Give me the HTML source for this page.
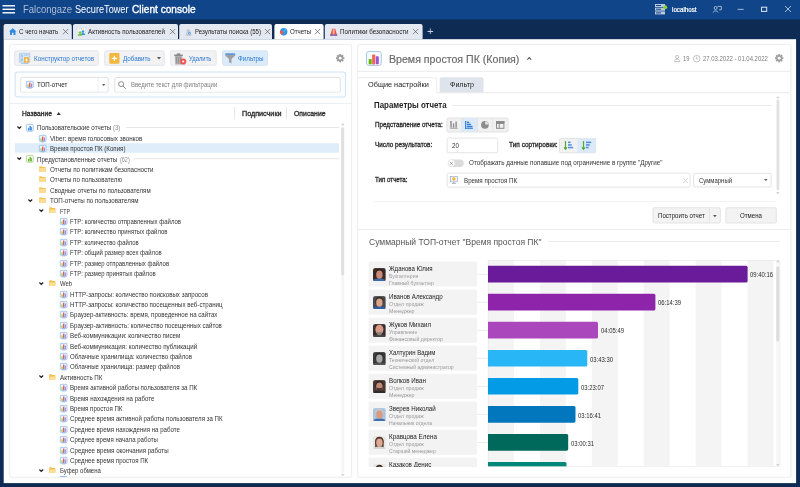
<!DOCTYPE html>
<html lang="ru"><head><meta charset="utf-8"><title>Falcongaze SecureTower Client console</title>
<style>
html,body{margin:0;padding:0;}
body{width:800px;height:487px;overflow:hidden;position:relative;background:#0d2b53;font-family:"Liberation Sans",sans-serif;}
.a{position:absolute;box-sizing:border-box;transform-origin:0 0;}
.t{position:absolute;white-space:nowrap;transform-origin:0 50%;display:block;}
svg{position:absolute;overflow:visible;}
</style></head><body><div id="root" style="position:absolute;left:0;top:0;width:800px;height:487px;will-change:transform;">
<div class="a" style="left:0px;top:0px;width:800px;height:20px;transform:translate(0.000px,0.000px) scale(1.0000,0.9850);background:#10458a;"></div>
<div class="a" style="left:0px;top:19px;width:800px;height:20px;transform:translate(0.000px,0.700px) scale(1.0000,1.0000);background:#0d2b53;"></div>
<div class="a" style="left:3px;top:39px;width:792px;height:444px;transform:translate(0.700px,0.200px) scale(1.0005,0.9998);background:#fefefe;"></div>
<div class="a" style="left:9px;top:44px;width:343px;height:434px;transform:translate(0.200px,0.000px) scale(0.9994,0.9995);background:#fff;border:1px solid #eeeff1;border-radius:3px;box-shadow:0 0 1.5px rgba(40,50,70,0.05);"></div>
<div class="a" style="left:357px;top:44px;width:434px;height:434px;transform:translate(0.200px,0.000px) scale(1.0000,0.9995);background:#fff;border:1px solid #eeeff1;border-radius:3px;box-shadow:0 0 1.5px rgba(40,50,70,0.05);"></div>
<div class="a" style="left:2px;top:5px;width:12px;height:1px;transform:translate(0.500px,0.100px) scale(1.0417,1.4000);background:#fff;"></div>
<div class="a" style="left:2px;top:8px;width:12px;height:1px;transform:translate(0.500px,0.600px) scale(1.0417,1.4000);background:#fff;"></div>
<div class="a" style="left:2px;top:12px;width:12px;height:1px;transform:translate(0.500px,0.100px) scale(1.0417,1.4000);background:#fff;"></div>
<span class="t" style="left:23px;top:2.60px;font-size:10px;line-height:14.0px;color:#aebbd6;transform:scaleX(0.9479);">Falcongaze</span>
<span class="t" style="left:74.5px;top:2.60px;font-size:10px;line-height:14.0px;color:#ffffff;transform:scaleX(0.9168);">SecureTower</span>
<span class="t" style="left:131.5px;top:2.60px;font-size:10px;line-height:14.0px;color:#ffffff;-webkit-text-stroke:0.35px #ffffff;transform:scaleX(1.0110);">Client console</span>
<svg style="left:655px;top:4px" width="12" height="11" viewBox="0 0 12 11"><rect x="0" y="0" width="10" height="3" fill="#bcc8dc"/><rect x="0" y="3.7" width="10" height="3" fill="#bcc8dc"/><rect x="0" y="7.4" width="10" height="3" fill="#bcc8dc"/><rect x="1" y="1" width="5" height="1" fill="#10458a"/><rect x="1" y="4.7" width="5" height="1" fill="#10458a"/><rect x="1" y="8.4" width="5" height="1" fill="#10458a"/><circle cx="10.2" cy="3.2" r="2" fill="#8bd13f"/></svg>
<span class="t" style="left:672px;top:5.18px;font-size:6.6px;line-height:9.24px;color:#ffffff;-webkit-text-stroke:0.2px #ffffff;transform:scaleX(0.9406);">localhost</span>
<svg style="left:712.5px;top:6px" width="9" height="7" viewBox="0 0 9 7" fill="none" stroke="#e6ecf6" stroke-width="0.65"><circle cx="2.6" cy="2" r="1.5"/><path d="M0.3 6.6 C0.3 4.2 4.9 4.2 4.9 6.6"/><path d="M4.5 0.4 H8.3 V3.8 H6"/></svg>
<div class="a" style="left:737px;top:8px;width:6px;height:1px;transform:translate(0.600px,0.900px) scale(1.0000,0.7000);background:#e6ecf6;"></div>
<div class="a" style="left:761px;top:6px;width:6px;height:5px;transform:translate(0.000px,0.700px) scale(1.0333,1.0400);border:0.6px solid #d9e1ef;"></div>
<svg style="left:785px;top:6.4px" width="6" height="6" viewBox="0 0 6 6" stroke="#e6ecf6" stroke-width="0.7"><path d="M0 0 L6 6 M6 0 L0 6"/></svg>
<div class="a" style="left:3px;top:24px;width:68px;height:15px;transform:translate(0.600px,0.000px) scale(1.0029,1.0133);background:#e4e8f1;border-radius:2px 2px 0 0;"></div>
<span class="t" style="left:19.3px;top:27.24px;font-size:6.8px;line-height:9.52px;color:#222;transform:scaleX(0.9044);">С чего начать</span>
<svg style="left:62.5px;top:29.3px" width="5.2" height="5.2" viewBox="0 0 6 6" stroke="#555" stroke-width="0.8"><path d="M0 0 L6 6 M6 0 L0 6"/></svg>
<div class="a" style="left:73px;top:24px;width:105px;height:15px;transform:translate(0.000px,0.000px) scale(1.0000,1.0133);background:#e4e8f1;border-radius:2px 2px 0 0;"></div>
<span class="t" style="left:88px;top:27.24px;font-size:6.8px;line-height:9.52px;color:#222;transform:scaleX(0.9107);">Активность пользователей</span>
<svg style="left:169.5px;top:29.3px" width="5.2" height="5.2" viewBox="0 0 6 6" stroke="#555" stroke-width="0.8"><path d="M0 0 L6 6 M6 0 L0 6"/></svg>
<div class="a" style="left:179px;top:24px;width:93px;height:15px;transform:translate(0.200px,0.000px) scale(0.9978,1.0133);background:#e4e8f1;border-radius:2px 2px 0 0;"></div>
<span class="t" style="left:194.5px;top:27.24px;font-size:6.8px;line-height:9.52px;color:#222;transform:scaleX(0.9024);">Результаты поиска (55)</span>
<svg style="left:264.6px;top:29.3px" width="5.2" height="5.2" viewBox="0 0 6 6" stroke="#555" stroke-width="0.8"><path d="M0 0 L6 6 M6 0 L0 6"/></svg>
<div class="a" style="left:274px;top:24px;width:49px;height:15px;transform:translate(0.400px,0.000px) scale(1.0041,1.0133);background:#ffffff;border-radius:2px 2px 0 0;"></div>
<span class="t" style="left:290px;top:27.24px;font-size:6.8px;line-height:9.52px;color:#222;transform:scaleX(0.8935);">Отчеты</span>
<svg style="left:315.2px;top:29.3px" width="5.2" height="5.2" viewBox="0 0 6 6" stroke="#555" stroke-width="0.8"><path d="M0 0 L6 6 M6 0 L0 6"/></svg>
<div class="a" style="left:324px;top:24px;width:98px;height:15px;transform:translate(0.800px,0.000px) scale(0.9980,1.0133);background:#e4e8f1;border-radius:2px 2px 0 0;"></div>
<span class="t" style="left:340.4px;top:27.24px;font-size:6.8px;line-height:9.52px;color:#222;transform:scaleX(0.9166);">Политики безопасности</span>
<svg style="left:413.2px;top:29.3px" width="5.2" height="5.2" viewBox="0 0 6 6" stroke="#555" stroke-width="0.8"><path d="M0 0 L6 6 M6 0 L0 6"/></svg>
<svg style="left:9px;top:28.3px" width="7.5" height="7" viewBox="0 0 10 9"><path d="M5 0 L10 4.6 H8.6 V9 H6 V6 H4 V9 H1.4 V4.6 H0 Z" fill="#2f8be0"/></svg>
<svg style="left:77.1px;top:27.2px" width="8.7" height="9.1" viewBox="0 0 8.7 9.1"><rect x="0.3" y="0.3" width="8.1" height="8.5" fill="#f7fafd" stroke="#d5dde8" stroke-width="0.6"/><circle cx="2.4" cy="2" r="0.6" fill="#f2c84b"/><circle cx="4.4" cy="1.7" r="0.6" fill="#6fb5ee"/><circle cx="6.3" cy="2.2" r="0.6" fill="#f2c84b"/><circle cx="6" cy="4.6" r="1.3" fill="#2f9be8"/><path d="M3.9 8 C3.9 5.4 8.1 5.4 8.1 8 Z" fill="#2f9be8"/><circle cx="3.1" cy="5.6" r="1.4" fill="#7bc142"/><path d="M0.7 8.8 C0.7 6.2 5.5 6.2 5.5 8.8 Z" fill="#7bc142"/></svg>
<svg style="left:184.8px;top:27.6px" width="7" height="8.4" viewBox="0 0 7 8.4"><path d="M3.2 0.4 L5.2 2.6 L6.6 7.9 H0.5 L1.6 3 Z" fill="#c9cdd5"/><path d="M2.2 1.6 L4.2 4.8" stroke="#8fc0ee" stroke-width="0.7"/><circle cx="4.4" cy="5.3" r="1.2" fill="#4a9ae0"/><circle cx="4.4" cy="5.3" r="0.5" fill="#eef3f9"/></svg>
<svg style="left:279.5px;top:28px" width="7.5" height="7.5" viewBox="0 0 8 8"><circle cx="4" cy="4" r="3.9" fill="#2f97ea"/><path d="M4 4 L0.5 2.4 A3.9 3.9 0 0 0 2.3 7.5 Z" fill="#f0574c"/><path d="M4 4 L6.4 1" stroke="#bfe0fa" stroke-width="0.5"/></svg>
<svg style="left:329.6px;top:27.8px" width="7.4" height="8" viewBox="0 0 8 8"><path d="M2.3 0.4 H5.7 L7.6 7.6 H0.4 Z" fill="#e8564a"/><rect x="3" y="1" width="2" height="6" fill="#f3b4a0"/><rect x="0" y="6.8" width="8" height="1.2" fill="#6a4fb0"/></svg>
<span class="t" style="left:426.8px;top:23.35px;font-size:11.5px;line-height:16.1px;color:#c9d2e6;transform:scaleX(0.9826);">+</span>
<div class="a" style="left:14px;top:50px;width:85px;height:16px;transform:translate(0.200px,0.300px) scale(0.9953,0.9688);background:#f2f2f3;border:1px solid #e3e6ea;border-radius:2px;"></div>
<div class="a" style="left:104px;top:50px;width:61px;height:16px;transform:translate(0.200px,0.300px) scale(0.9934,0.9688);background:#f2f2f3;border:1px solid #e3e6ea;border-radius:2px;"></div>
<div class="a" style="left:170px;top:50px;width:46px;height:16px;transform:translate(0.300px,0.300px) scale(1.0087,0.9688);background:#f2f2f3;border:1px solid #e3e6ea;border-radius:2px;"></div>
<div class="a" style="left:222px;top:50px;width:46px;height:16px;transform:translate(0.000px,0.300px) scale(1.0000,0.9688);background:#dcebf9;border:1px solid #d3e4f5;border-radius:2px;"></div>
<svg style="left:19px;top:52.7px" width="11.3" height="11.2" viewBox="0 0 11.3 11.2"><rect x="0.4" y="0.4" width="10.4" height="8.8" fill="#d9e8f8" stroke="#8fb8e6" stroke-width="0.8" stroke-dasharray="1.1 0.5"/><rect x="1.5" y="1.6" width="2.6" height="2.8" fill="#a9c9ec"/><rect x="4.8" y="1.6" width="4.6" height="1.1" fill="#a9c9ec"/><rect x="1.5" y="5.2" width="2.6" height="3" fill="#a9c9ec"/><rect x="5" y="4.2" width="5" height="5.4" fill="#f5b030"/><path d="M7.5 4.9 L8.7 6.9 L7.5 8.9 L6.3 6.9 Z" fill="#fff"/><rect x="2" y="10.2" width="7.4" height="0.7" fill="#8fb8e6"/></svg>
<span class="t" style="left:33.9px;top:53.78px;font-size:6.6px;line-height:9.24px;color:#2a79d6;transform:scaleX(0.9536);">Конструктор отчетов</span>
<svg style="left:109.1px;top:53px" width="10.8" height="10.7" viewBox="0 0 10 10.5"><rect x="0" y="0" width="10" height="10.5" rx="1" fill="#f2b83e"/><path d="M5 2.6 V7.9 M2.4 5.25 H7.6" stroke="#fff" stroke-width="1.1"/></svg>
<span class="t" style="left:122.8px;top:53.78px;font-size:6.6px;line-height:9.24px;color:#2a79d6;transform:scaleX(0.9463);">Добавить</span>
<svg style="left:156.9px;top:57.2px" width="4" height="2.4" viewBox="0 0 4 2.4"><path d="M0 0 H4 L2 2.4 Z" fill="#555"/></svg>
<svg style="left:174.4px;top:52.6px" width="13" height="12" viewBox="0 0 13 12"><rect x="0.2" y="1.6" width="8.6" height="1.3" fill="#7d7d7d"/><rect x="2.8" y="0.4" width="3.4" height="1.3" fill="#7d7d7d"/><path d="M0.7 3.1 H8.3 L7.8 11.4 H1.2 Z" fill="#b4b4b4"/><rect x="2.2" y="3.8" width="0.9" height="6.8" fill="#8e8e8e"/><rect x="4.05" y="3.8" width="0.9" height="6.8" fill="#8e8e8e"/><rect x="5.9" y="3.8" width="0.9" height="6.8" fill="#8e8e8e"/><circle cx="9.2" cy="8.5" r="3.1" fill="#ef5354"/><rect x="8.2" y="7.7" width="2" height="1.6" fill="#fff"/></svg>
<span class="t" style="left:189.2px;top:53.78px;font-size:6.6px;line-height:9.24px;color:#2a79d6;transform:scaleX(0.8890);">Удалить</span>
<svg style="left:225.3px;top:52.8px" width="10.5" height="10.8" viewBox="0 0 10.5 10.8"><path d="M0.3 1.4 H10.2 V2.4 L6.5 6 V10.5 L4 9.2 V6 L0.3 2.4 Z" fill="#a0a0a0"/><rect x="0.3" y="0.3" width="9.9" height="1.7" rx="0.6" fill="#5b9ad8"/></svg>
<span class="t" style="left:238.3px;top:53.78px;font-size:6.6px;line-height:9.24px;color:#2a79d6;transform:scaleX(0.9474);">Фильтры</span>
<svg style="left:336px;top:53.8px" width="8.4" height="8.4" viewBox="-5 -5 10 10"><rect x="-1.1" y="-5" width="2.2" height="2.6" transform="rotate(0)" fill="#9c9c9c"/><rect x="-1.1" y="-5" width="2.2" height="2.6" transform="rotate(45)" fill="#9c9c9c"/><rect x="-1.1" y="-5" width="2.2" height="2.6" transform="rotate(90)" fill="#9c9c9c"/><rect x="-1.1" y="-5" width="2.2" height="2.6" transform="rotate(135)" fill="#9c9c9c"/><rect x="-1.1" y="-5" width="2.2" height="2.6" transform="rotate(180)" fill="#9c9c9c"/><rect x="-1.1" y="-5" width="2.2" height="2.6" transform="rotate(225)" fill="#9c9c9c"/><rect x="-1.1" y="-5" width="2.2" height="2.6" transform="rotate(270)" fill="#9c9c9c"/><rect x="-1.1" y="-5" width="2.2" height="2.6" transform="rotate(315)" fill="#9c9c9c"/><circle r="3.6" fill="#9c9c9c"/><circle r="1.7" fill="#fff"/></svg>
<div class="a" style="left:14px;top:71px;width:331px;height:26px;transform:translate(0.700px,0.600px) scale(1.0012,1.0000);background:#fbfdff;border:1px solid #cde4f6;border-radius:3px;"></div>
<div class="a" style="left:20px;top:77px;width:88px;height:16px;transform:translate(0.200px,0.000px) scale(1.0057,0.9750);background:#fff;border:1px solid #e2e2e2;border-radius:2px;"></div>
<div class="a" style="left:97px;top:77px;width:1px;height:14px;transform:translate(0.600px,0.600px) scale(0.7000,1.0286);background:#e6e6e6;"></div>
<svg style="left:25.8px;top:80.8px" width="7.6" height="7.6" viewBox="0 0 8 8"><rect x="0.35" y="0.35" width="7.3" height="6.5" rx="0.6" fill="#eef5fd" stroke="#7eaee6" stroke-width="0.7"/><rect x="1.5" y="3.6" width="1.4" height="2.8" fill="#9bd15a"/><rect x="3.3" y="1.7" width="1.4" height="4.7" fill="#ea5545"/><rect x="5.1" y="2.7" width="1.4" height="3.7" fill="#a98be6"/><rect x="2" y="7.1" width="4" height="0.8" fill="#7eaee6"/></svg>
<span class="t" style="left:36.9px;top:80.48px;font-size:6.6px;line-height:9.24px;color:#222;transform:scaleX(0.9390);">ТОП-отчет</span>
<svg style="left:101.9px;top:83.7px" width="3.4" height="2" viewBox="0 0 4 2.4"><path d="M0 0 H4 L2 2.4 Z" fill="#555"/></svg>
<div class="a" style="left:114px;top:77px;width:226px;height:16px;transform:translate(0.300px,0.000px) scale(1.0022,0.9750);background:#fff;border:1px solid #e2e2e2;border-radius:2px;"></div>
<svg style="left:117.6px;top:80.6px" width="8" height="8" viewBox="0 0 8 8" fill="none" stroke="#8c8c8c" stroke-width="1"><circle cx="3.1" cy="3.1" r="2.5"/><path d="M4.9 4.9 L7.7 7.7"/></svg>
<span class="t" style="left:131.2px;top:80.52px;font-size:6.4px;line-height:8.96px;color:#7e7e7e;transform:scaleX(0.9320);">Введите текст для фильтрации</span>
<div class="a" style="left:9px;top:102px;width:342px;height:1px;transform:translate(0.800px,0.900px) scale(0.9988,0.8000);background:#e7e8ea;"></div>
<span class="t" style="left:22px;top:108.77px;font-size:6.9px;line-height:9.66px;color:#2a2a2a;-webkit-text-stroke:0.3px #2a2a2a;transform:scaleX(0.9698);">Название</span>
<svg style="left:55.9px;top:112.1px" width="5.4" height="3" viewBox="0 0 4 3"><path d="M0 3 H4 L2 0 Z" fill="#333"/></svg>
<span class="t" style="left:241.6px;top:108.77px;font-size:6.9px;line-height:9.66px;color:#2a2a2a;-webkit-text-stroke:0.3px #2a2a2a;transform:scaleX(1.0433);">Подписчики</span>
<span class="t" style="left:293.5px;top:108.77px;font-size:6.9px;line-height:9.66px;color:#2a2a2a;-webkit-text-stroke:0.3px #2a2a2a;transform:scaleX(0.9954);">Описание</span>
<div class="a" style="left:234px;top:107px;width:1px;height:12px;transform:translate(0.400px,0.000px) scale(0.7000,1.0333);background:#dcdcdc;"></div>
<div class="a" style="left:286px;top:107px;width:1px;height:12px;transform:translate(0.300px,0.000px) scale(0.7000,1.0333);background:#dcdcdc;"></div>
<div class="a" style="left:341px;top:127px;width:3px;height:346px;transform:translate(0.200px,0.000px) scale(1.0000,1.0000);background:#f5f5f5;border-radius:1.5px;"></div>
<div class="a" style="left:341px;top:127px;width:3px;height:148px;transform:translate(0.200px,0.200px) scale(1.0000,1.0000);background:#dfdfdf;border-radius:1.5px;"></div>
<svg style="left:341.4px;top:122.6px" width="3.6" height="2.2" viewBox="0 0 4 2.4"><path d="M0 2.4 H4 L2 0 Z" fill="#d0d0d0"/></svg>
<svg style="left:341.4px;top:473.6px" width="3.6" height="2.2" viewBox="0 0 4 2.4"><path d="M0 0 H4 L2 2.4 Z" fill="#d0d0d0"/></svg>
<div class="a" style="left:14px;top:143px;width:324px;height:10px;transform:translate(0.800px,0.200px) scale(1.0006,0.9500);background:#deedf9;"></div>
<svg style="left:17.3px;top:125.85000000000001px" width="4.6" height="3.2" viewBox="0 0 4.6 3.2" fill="none" stroke="#222" stroke-width="1.15"><path d="M0.4 0.5 L2.3 2.5 L4.2 0.5"/></svg>
<svg style="left:26.3px;top:123.65px" width="7.6" height="7.6" viewBox="0 0 8 8"><rect x="0.4" y="0.4" width="7.2" height="7.2" rx="1.2" fill="#f7fbff" stroke="#8bb5e8" stroke-width="0.8"/><rect x="2.1" y="4" width="1.3" height="2.8" fill="#3b8de0"/><rect x="3.7" y="2" width="1.5" height="4.8" fill="#3b8de0"/><rect x="5.4" y="3.2" width="0.9" height="3.6" fill="#3b8de0"/></svg>
<span class="t" style="left:36.9px;top:123.43px;font-size:6.6px;line-height:9.24px;color:#333;transform:scaleX(0.9344);">Пользовательские отчеты</span>
<span class="t" style="left:113.3px;top:123.43px;font-size:6.6px;line-height:9.24px;color:#8a8a8a;transform:scaleX(0.8927);">(3)</span>
<div class="a" style="left:126px;top:127px;width:213px;height:1px;transform:translate(0.100px,0.250px) scale(0.9995,0.7000);background:#dcdcdc;"></div>
<svg style="left:38.9px;top:134.84px" width="7.4" height="7.4" viewBox="0 0 8 8"><rect x="0.35" y="0.35" width="7.3" height="6.5" rx="0.6" fill="#eef5fd" stroke="#7eaee6" stroke-width="0.7"/><rect x="1.5" y="3.6" width="1.4" height="2.8" fill="#9bd15a"/><rect x="3.3" y="1.7" width="1.4" height="4.7" fill="#ea5545"/><rect x="5.1" y="2.7" width="1.4" height="3.7" fill="#a98be6"/><rect x="2" y="7.1" width="4" height="0.8" fill="#7eaee6"/></svg>
<span class="t" style="left:49.5px;top:133.82px;font-size:6.6px;line-height:9.24px;color:#333;transform:scaleX(0.9480);">Viber: время голосовых звонков</span>
<svg style="left:38.9px;top:145.23000000000002px" width="7.4" height="7.4" viewBox="0 0 8 8"><rect x="0.35" y="0.35" width="7.3" height="6.5" rx="0.6" fill="#eef5fd" stroke="#7eaee6" stroke-width="0.7"/><rect x="1.5" y="3.6" width="1.4" height="2.8" fill="#9bd15a"/><rect x="3.3" y="1.7" width="1.4" height="4.7" fill="#ea5545"/><rect x="5.1" y="2.7" width="1.4" height="3.7" fill="#a98be6"/><rect x="2" y="7.1" width="4" height="0.8" fill="#7eaee6"/></svg>
<span class="t" style="left:49.5px;top:144.21px;font-size:6.6px;line-height:9.24px;color:#333;transform:scaleX(0.9310);">Время простоя ПК (Копия)</span>
<svg style="left:17.3px;top:157.02px" width="4.6" height="3.2" viewBox="0 0 4.6 3.2" fill="none" stroke="#222" stroke-width="1.15"><path d="M0.4 0.5 L2.3 2.5 L4.2 0.5"/></svg>
<svg style="left:26.3px;top:154.82px" width="7.6" height="7.6" viewBox="0 0 8 8"><rect x="0.4" y="0.4" width="7.2" height="7.2" rx="1.2" fill="#f7fbff" stroke="#a5d06f" stroke-width="0.8"/><rect x="2.1" y="4" width="1.3" height="2.8" fill="#6ab82f"/><rect x="3.7" y="2" width="1.5" height="4.8" fill="#6ab82f"/><rect x="5.4" y="3.2" width="0.9" height="3.6" fill="#6ab82f"/></svg>
<span class="t" style="left:36.9px;top:154.60px;font-size:6.6px;line-height:9.24px;color:#333;transform:scaleX(0.9340);">Предустановленные отчеты</span>
<span class="t" style="left:119.8px;top:154.60px;font-size:6.6px;line-height:9.24px;color:#8a8a8a;transform:scaleX(0.8265);">(62)</span>
<div class="a" style="left:134px;top:158px;width:205px;height:1px;transform:translate(0.000px,0.420px) scale(1.0000,0.7000);background:#dcdcdc;"></div>
<svg style="left:38.9px;top:165.91px" width="7" height="6.2" viewBox="0 0 7 6.2"><path d="M0.2 0.8 Q0.2 0.2 0.8 0.2 H2.4 L3.2 1 H6.2 Q6.8 1 6.8 1.6 V5.4 Q6.8 6 6.2 6 H0.8 Q0.2 6 0.2 5.4 Z" fill="#f7c255"/><path d="M0.9 1.9 H6.8 V5.4 Q6.8 6 6.2 6 H0.8 Q0.2 6 0.2 5.4 V2.6 Z" fill="#fcdc92"/></svg>
<span class="t" style="left:49.5px;top:164.99px;font-size:6.6px;line-height:9.24px;color:#333;transform:scaleX(0.9430);">Отчеты по политикам безопасности</span>
<svg style="left:38.9px;top:176.3px" width="7" height="6.2" viewBox="0 0 7 6.2"><path d="M0.2 0.8 Q0.2 0.2 0.8 0.2 H2.4 L3.2 1 H6.2 Q6.8 1 6.8 1.6 V5.4 Q6.8 6 6.2 6 H0.8 Q0.2 6 0.2 5.4 Z" fill="#f7c255"/><path d="M0.9 1.9 H6.8 V5.4 Q6.8 6 6.2 6 H0.8 Q0.2 6 0.2 5.4 V2.6 Z" fill="#fcdc92"/></svg>
<span class="t" style="left:49.5px;top:175.38px;font-size:6.6px;line-height:9.24px;color:#333;transform:scaleX(0.9377);">Отчеты по пользователю</span>
<svg style="left:38.9px;top:186.69000000000003px" width="7" height="6.2" viewBox="0 0 7 6.2"><path d="M0.2 0.8 Q0.2 0.2 0.8 0.2 H2.4 L3.2 1 H6.2 Q6.8 1 6.8 1.6 V5.4 Q6.8 6 6.2 6 H0.8 Q0.2 6 0.2 5.4 Z" fill="#f7c255"/><path d="M0.9 1.9 H6.8 V5.4 Q6.8 6 6.2 6 H0.8 Q0.2 6 0.2 5.4 V2.6 Z" fill="#fcdc92"/></svg>
<span class="t" style="left:49.5px;top:185.77px;font-size:6.6px;line-height:9.24px;color:#333;transform:scaleX(0.9332);">Сводные отчеты по пользователям</span>
<svg style="left:28.3px;top:198.58px" width="4.6" height="3.2" viewBox="0 0 4.6 3.2" fill="none" stroke="#222" stroke-width="1.15"><path d="M0.4 0.5 L2.3 2.5 L4.2 0.5"/></svg>
<svg style="left:38.9px;top:197.08px" width="7" height="6.2" viewBox="0 0 7 6.2"><path d="M0.2 0.8 Q0.2 0.2 0.8 0.2 H2.4 L3.2 1 H6.2 Q6.8 1 6.8 1.6 V5.4 Q6.8 6 6.2 6 H0.8 Q0.2 6 0.2 5.4 Z" fill="#f7c255"/><path d="M0.9 1.9 H6.8 V5.4 Q6.8 6 6.2 6 H0.8 Q0.2 6 0.2 5.4 V2.6 Z" fill="#fcdc92"/></svg>
<span class="t" style="left:49.5px;top:196.16px;font-size:6.6px;line-height:9.24px;color:#333;transform:scaleX(0.9400);">ТОП-отчеты по пользователям</span>
<svg style="left:38.6px;top:208.97px" width="4.6" height="3.2" viewBox="0 0 4.6 3.2" fill="none" stroke="#222" stroke-width="1.15"><path d="M0.4 0.5 L2.3 2.5 L4.2 0.5"/></svg>
<svg style="left:49.2px;top:207.47px" width="7.4" height="6" viewBox="0 0 7.4 6"><path d="M0.3 0.8 Q0.3 0.3 0.8 0.3 H2.6 L3.3 1 H5.8 Q6.3 1 6.3 1.5 V5.7 H0.3 Z" fill="#f5bd4a"/><path d="M1.4 2.4 H7.2 L6.2 5.7 H0.4 Z" fill="#fde09a"/></svg>
<span class="t" style="left:59.7px;top:206.55px;font-size:6.6px;line-height:9.24px;color:#333;transform:scaleX(0.8103);">FTP</span>
<svg style="left:59.5px;top:217.96px" width="7.4" height="7.4" viewBox="0 0 8 8"><rect x="0.35" y="0.35" width="7.3" height="6.5" rx="0.6" fill="#eef5fd" stroke="#7eaee6" stroke-width="0.7"/><rect x="1.5" y="3.6" width="1.4" height="2.8" fill="#9bd15a"/><rect x="3.3" y="1.7" width="1.4" height="4.7" fill="#ea5545"/><rect x="5.1" y="2.7" width="1.4" height="3.7" fill="#a98be6"/><rect x="2" y="7.1" width="4" height="0.8" fill="#7eaee6"/></svg>
<span class="t" style="left:70.1px;top:216.94px;font-size:6.6px;line-height:9.24px;color:#333;transform:scaleX(0.9113);">FTP: количество отправленных файлов</span>
<svg style="left:59.5px;top:228.35000000000002px" width="7.4" height="7.4" viewBox="0 0 8 8"><rect x="0.35" y="0.35" width="7.3" height="6.5" rx="0.6" fill="#eef5fd" stroke="#7eaee6" stroke-width="0.7"/><rect x="1.5" y="3.6" width="1.4" height="2.8" fill="#9bd15a"/><rect x="3.3" y="1.7" width="1.4" height="4.7" fill="#ea5545"/><rect x="5.1" y="2.7" width="1.4" height="3.7" fill="#a98be6"/><rect x="2" y="7.1" width="4" height="0.8" fill="#7eaee6"/></svg>
<span class="t" style="left:70.1px;top:227.33px;font-size:6.6px;line-height:9.24px;color:#333;transform:scaleX(0.9082);">FTP: количество принятых файлов</span>
<svg style="left:59.5px;top:238.74px" width="7.4" height="7.4" viewBox="0 0 8 8"><rect x="0.35" y="0.35" width="7.3" height="6.5" rx="0.6" fill="#eef5fd" stroke="#7eaee6" stroke-width="0.7"/><rect x="1.5" y="3.6" width="1.4" height="2.8" fill="#9bd15a"/><rect x="3.3" y="1.7" width="1.4" height="4.7" fill="#ea5545"/><rect x="5.1" y="2.7" width="1.4" height="3.7" fill="#a98be6"/><rect x="2" y="7.1" width="4" height="0.8" fill="#7eaee6"/></svg>
<span class="t" style="left:70.1px;top:237.72px;font-size:6.6px;line-height:9.24px;color:#333;transform:scaleX(0.9004);">FTP: количество файлов</span>
<svg style="left:59.5px;top:249.13px" width="7.4" height="7.4" viewBox="0 0 8 8"><rect x="0.35" y="0.35" width="7.3" height="6.5" rx="0.6" fill="#eef5fd" stroke="#7eaee6" stroke-width="0.7"/><rect x="1.5" y="3.6" width="1.4" height="2.8" fill="#9bd15a"/><rect x="3.3" y="1.7" width="1.4" height="4.7" fill="#ea5545"/><rect x="5.1" y="2.7" width="1.4" height="3.7" fill="#a98be6"/><rect x="2" y="7.1" width="4" height="0.8" fill="#7eaee6"/></svg>
<span class="t" style="left:70.1px;top:248.11px;font-size:6.6px;line-height:9.24px;color:#333;transform:scaleX(0.9034);">FTP: общий размер всех файлов</span>
<svg style="left:59.5px;top:259.52px" width="7.4" height="7.4" viewBox="0 0 8 8"><rect x="0.35" y="0.35" width="7.3" height="6.5" rx="0.6" fill="#eef5fd" stroke="#7eaee6" stroke-width="0.7"/><rect x="1.5" y="3.6" width="1.4" height="2.8" fill="#9bd15a"/><rect x="3.3" y="1.7" width="1.4" height="4.7" fill="#ea5545"/><rect x="5.1" y="2.7" width="1.4" height="3.7" fill="#a98be6"/><rect x="2" y="7.1" width="4" height="0.8" fill="#7eaee6"/></svg>
<span class="t" style="left:70.1px;top:258.50px;font-size:6.6px;line-height:9.24px;color:#333;transform:scaleX(0.9057);">FTP: размер отправленных файлов</span>
<svg style="left:59.5px;top:269.91px" width="7.4" height="7.4" viewBox="0 0 8 8"><rect x="0.35" y="0.35" width="7.3" height="6.5" rx="0.6" fill="#eef5fd" stroke="#7eaee6" stroke-width="0.7"/><rect x="1.5" y="3.6" width="1.4" height="2.8" fill="#9bd15a"/><rect x="3.3" y="1.7" width="1.4" height="4.7" fill="#ea5545"/><rect x="5.1" y="2.7" width="1.4" height="3.7" fill="#a98be6"/><rect x="2" y="7.1" width="4" height="0.8" fill="#7eaee6"/></svg>
<span class="t" style="left:70.1px;top:268.89px;font-size:6.6px;line-height:9.24px;color:#333;transform:scaleX(0.9014);">FTP: размер принятых файлов</span>
<svg style="left:38.6px;top:281.7px" width="4.6" height="3.2" viewBox="0 0 4.6 3.2" fill="none" stroke="#222" stroke-width="1.15"><path d="M0.4 0.5 L2.3 2.5 L4.2 0.5"/></svg>
<svg style="left:49.2px;top:280.2px" width="7.4" height="6" viewBox="0 0 7.4 6"><path d="M0.3 0.8 Q0.3 0.3 0.8 0.3 H2.6 L3.3 1 H5.8 Q6.3 1 6.3 1.5 V5.7 H0.3 Z" fill="#f5bd4a"/><path d="M1.4 2.4 H7.2 L6.2 5.7 H0.4 Z" fill="#fde09a"/></svg>
<span class="t" style="left:59.7px;top:279.28px;font-size:6.6px;line-height:9.24px;color:#333;transform:scaleX(0.8996);">Web</span>
<svg style="left:59.5px;top:290.69px" width="7.4" height="7.4" viewBox="0 0 8 8"><rect x="0.35" y="0.35" width="7.3" height="6.5" rx="0.6" fill="#eef5fd" stroke="#7eaee6" stroke-width="0.7"/><rect x="1.5" y="3.6" width="1.4" height="2.8" fill="#9bd15a"/><rect x="3.3" y="1.7" width="1.4" height="4.7" fill="#ea5545"/><rect x="5.1" y="2.7" width="1.4" height="3.7" fill="#a98be6"/><rect x="2" y="7.1" width="4" height="0.8" fill="#7eaee6"/></svg>
<span class="t" style="left:70.1px;top:289.67px;font-size:6.6px;line-height:9.24px;color:#333;transform:scaleX(0.9360);">HTTP-запросы: количество поисковых запросов</span>
<svg style="left:59.5px;top:301.08px" width="7.4" height="7.4" viewBox="0 0 8 8"><rect x="0.35" y="0.35" width="7.3" height="6.5" rx="0.6" fill="#eef5fd" stroke="#7eaee6" stroke-width="0.7"/><rect x="1.5" y="3.6" width="1.4" height="2.8" fill="#9bd15a"/><rect x="3.3" y="1.7" width="1.4" height="4.7" fill="#ea5545"/><rect x="5.1" y="2.7" width="1.4" height="3.7" fill="#a98be6"/><rect x="2" y="7.1" width="4" height="0.8" fill="#7eaee6"/></svg>
<span class="t" style="left:70.1px;top:300.06px;font-size:6.6px;line-height:9.24px;color:#333;transform:scaleX(0.9349);">HTTP-запросы: количество посещенных веб-страниц</span>
<svg style="left:59.5px;top:311.47px" width="7.4" height="7.4" viewBox="0 0 8 8"><rect x="0.35" y="0.35" width="7.3" height="6.5" rx="0.6" fill="#eef5fd" stroke="#7eaee6" stroke-width="0.7"/><rect x="1.5" y="3.6" width="1.4" height="2.8" fill="#9bd15a"/><rect x="3.3" y="1.7" width="1.4" height="4.7" fill="#ea5545"/><rect x="5.1" y="2.7" width="1.4" height="3.7" fill="#a98be6"/><rect x="2" y="7.1" width="4" height="0.8" fill="#7eaee6"/></svg>
<span class="t" style="left:70.1px;top:310.45px;font-size:6.6px;line-height:9.24px;color:#333;transform:scaleX(0.9266);">Браузер-активность: время, проведенное на сайтах</span>
<svg style="left:59.5px;top:321.86px" width="7.4" height="7.4" viewBox="0 0 8 8"><rect x="0.35" y="0.35" width="7.3" height="6.5" rx="0.6" fill="#eef5fd" stroke="#7eaee6" stroke-width="0.7"/><rect x="1.5" y="3.6" width="1.4" height="2.8" fill="#9bd15a"/><rect x="3.3" y="1.7" width="1.4" height="4.7" fill="#ea5545"/><rect x="5.1" y="2.7" width="1.4" height="3.7" fill="#a98be6"/><rect x="2" y="7.1" width="4" height="0.8" fill="#7eaee6"/></svg>
<span class="t" style="left:70.1px;top:320.84px;font-size:6.6px;line-height:9.24px;color:#333;transform:scaleX(0.9351);">Браузер-активность: количество посещенных сайтов</span>
<svg style="left:59.5px;top:332.25px" width="7.4" height="7.4" viewBox="0 0 8 8"><rect x="0.35" y="0.35" width="7.3" height="6.5" rx="0.6" fill="#eef5fd" stroke="#7eaee6" stroke-width="0.7"/><rect x="1.5" y="3.6" width="1.4" height="2.8" fill="#9bd15a"/><rect x="3.3" y="1.7" width="1.4" height="4.7" fill="#ea5545"/><rect x="5.1" y="2.7" width="1.4" height="3.7" fill="#a98be6"/><rect x="2" y="7.1" width="4" height="0.8" fill="#7eaee6"/></svg>
<span class="t" style="left:70.1px;top:331.23px;font-size:6.6px;line-height:9.24px;color:#333;transform:scaleX(0.9430);">Веб-коммуникации: количество писем</span>
<svg style="left:59.5px;top:342.64px" width="7.4" height="7.4" viewBox="0 0 8 8"><rect x="0.35" y="0.35" width="7.3" height="6.5" rx="0.6" fill="#eef5fd" stroke="#7eaee6" stroke-width="0.7"/><rect x="1.5" y="3.6" width="1.4" height="2.8" fill="#9bd15a"/><rect x="3.3" y="1.7" width="1.4" height="4.7" fill="#ea5545"/><rect x="5.1" y="2.7" width="1.4" height="3.7" fill="#a98be6"/><rect x="2" y="7.1" width="4" height="0.8" fill="#7eaee6"/></svg>
<span class="t" style="left:70.1px;top:341.62px;font-size:6.6px;line-height:9.24px;color:#333;transform:scaleX(0.9499);">Веб-коммуникация: количество публикаций</span>
<svg style="left:59.5px;top:353.03000000000003px" width="7.4" height="7.4" viewBox="0 0 8 8"><rect x="0.35" y="0.35" width="7.3" height="6.5" rx="0.6" fill="#eef5fd" stroke="#7eaee6" stroke-width="0.7"/><rect x="1.5" y="3.6" width="1.4" height="2.8" fill="#9bd15a"/><rect x="3.3" y="1.7" width="1.4" height="4.7" fill="#ea5545"/><rect x="5.1" y="2.7" width="1.4" height="3.7" fill="#a98be6"/><rect x="2" y="7.1" width="4" height="0.8" fill="#7eaee6"/></svg>
<span class="t" style="left:70.1px;top:352.01px;font-size:6.6px;line-height:9.24px;color:#333;transform:scaleX(0.9258);">Облачные хранилища: количество файлов</span>
<svg style="left:59.5px;top:363.42px" width="7.4" height="7.4" viewBox="0 0 8 8"><rect x="0.35" y="0.35" width="7.3" height="6.5" rx="0.6" fill="#eef5fd" stroke="#7eaee6" stroke-width="0.7"/><rect x="1.5" y="3.6" width="1.4" height="2.8" fill="#9bd15a"/><rect x="3.3" y="1.7" width="1.4" height="4.7" fill="#ea5545"/><rect x="5.1" y="2.7" width="1.4" height="3.7" fill="#a98be6"/><rect x="2" y="7.1" width="4" height="0.8" fill="#7eaee6"/></svg>
<span class="t" style="left:70.1px;top:362.40px;font-size:6.6px;line-height:9.24px;color:#333;transform:scaleX(0.9206);">Облачные хранилища: размер файлов</span>
<svg style="left:38.6px;top:375.21px" width="4.6" height="3.2" viewBox="0 0 4.6 3.2" fill="none" stroke="#222" stroke-width="1.15"><path d="M0.4 0.5 L2.3 2.5 L4.2 0.5"/></svg>
<svg style="left:49.2px;top:373.71px" width="7.4" height="6" viewBox="0 0 7.4 6"><path d="M0.3 0.8 Q0.3 0.3 0.8 0.3 H2.6 L3.3 1 H5.8 Q6.3 1 6.3 1.5 V5.7 H0.3 Z" fill="#f5bd4a"/><path d="M1.4 2.4 H7.2 L6.2 5.7 H0.4 Z" fill="#fde09a"/></svg>
<span class="t" style="left:59.7px;top:372.79px;font-size:6.6px;line-height:9.24px;color:#333;transform:scaleX(0.9428);">Активность ПК</span>
<svg style="left:59.5px;top:384.2px" width="7.4" height="7.4" viewBox="0 0 8 8"><rect x="0.35" y="0.35" width="7.3" height="6.5" rx="0.6" fill="#eef5fd" stroke="#7eaee6" stroke-width="0.7"/><rect x="1.5" y="3.6" width="1.4" height="2.8" fill="#9bd15a"/><rect x="3.3" y="1.7" width="1.4" height="4.7" fill="#ea5545"/><rect x="5.1" y="2.7" width="1.4" height="3.7" fill="#a98be6"/><rect x="2" y="7.1" width="4" height="0.8" fill="#7eaee6"/></svg>
<span class="t" style="left:70.1px;top:383.18px;font-size:6.6px;line-height:9.24px;color:#333;transform:scaleX(0.9336);">Время активной работы пользователя за ПК</span>
<svg style="left:59.5px;top:394.59px" width="7.4" height="7.4" viewBox="0 0 8 8"><rect x="0.35" y="0.35" width="7.3" height="6.5" rx="0.6" fill="#eef5fd" stroke="#7eaee6" stroke-width="0.7"/><rect x="1.5" y="3.6" width="1.4" height="2.8" fill="#9bd15a"/><rect x="3.3" y="1.7" width="1.4" height="4.7" fill="#ea5545"/><rect x="5.1" y="2.7" width="1.4" height="3.7" fill="#a98be6"/><rect x="2" y="7.1" width="4" height="0.8" fill="#7eaee6"/></svg>
<span class="t" style="left:70.1px;top:393.57px;font-size:6.6px;line-height:9.24px;color:#333;transform:scaleX(0.9295);">Время нахождения на работе</span>
<svg style="left:59.5px;top:404.98px" width="7.4" height="7.4" viewBox="0 0 8 8"><rect x="0.35" y="0.35" width="7.3" height="6.5" rx="0.6" fill="#eef5fd" stroke="#7eaee6" stroke-width="0.7"/><rect x="1.5" y="3.6" width="1.4" height="2.8" fill="#9bd15a"/><rect x="3.3" y="1.7" width="1.4" height="4.7" fill="#ea5545"/><rect x="5.1" y="2.7" width="1.4" height="3.7" fill="#a98be6"/><rect x="2" y="7.1" width="4" height="0.8" fill="#7eaee6"/></svg>
<span class="t" style="left:70.1px;top:403.96px;font-size:6.6px;line-height:9.24px;color:#333;transform:scaleX(0.9271);">Время простоя ПК</span>
<svg style="left:59.5px;top:415.37px" width="7.4" height="7.4" viewBox="0 0 8 8"><rect x="0.35" y="0.35" width="7.3" height="6.5" rx="0.6" fill="#eef5fd" stroke="#7eaee6" stroke-width="0.7"/><rect x="1.5" y="3.6" width="1.4" height="2.8" fill="#9bd15a"/><rect x="3.3" y="1.7" width="1.4" height="4.7" fill="#ea5545"/><rect x="5.1" y="2.7" width="1.4" height="3.7" fill="#a98be6"/><rect x="2" y="7.1" width="4" height="0.8" fill="#7eaee6"/></svg>
<span class="t" style="left:70.1px;top:414.35px;font-size:6.6px;line-height:9.24px;color:#333;transform:scaleX(0.9306);">Среднее время активной работы пользователя за ПК</span>
<svg style="left:59.5px;top:425.76px" width="7.4" height="7.4" viewBox="0 0 8 8"><rect x="0.35" y="0.35" width="7.3" height="6.5" rx="0.6" fill="#eef5fd" stroke="#7eaee6" stroke-width="0.7"/><rect x="1.5" y="3.6" width="1.4" height="2.8" fill="#9bd15a"/><rect x="3.3" y="1.7" width="1.4" height="4.7" fill="#ea5545"/><rect x="5.1" y="2.7" width="1.4" height="3.7" fill="#a98be6"/><rect x="2" y="7.1" width="4" height="0.8" fill="#7eaee6"/></svg>
<span class="t" style="left:70.1px;top:424.74px;font-size:6.6px;line-height:9.24px;color:#333;transform:scaleX(0.9271);">Среднее время нахождения на работе</span>
<svg style="left:59.5px;top:436.15000000000003px" width="7.4" height="7.4" viewBox="0 0 8 8"><rect x="0.35" y="0.35" width="7.3" height="6.5" rx="0.6" fill="#eef5fd" stroke="#7eaee6" stroke-width="0.7"/><rect x="1.5" y="3.6" width="1.4" height="2.8" fill="#9bd15a"/><rect x="3.3" y="1.7" width="1.4" height="4.7" fill="#ea5545"/><rect x="5.1" y="2.7" width="1.4" height="3.7" fill="#a98be6"/><rect x="2" y="7.1" width="4" height="0.8" fill="#7eaee6"/></svg>
<span class="t" style="left:70.1px;top:435.13px;font-size:6.6px;line-height:9.24px;color:#333;transform:scaleX(0.9207);">Среднее время начала работы</span>
<svg style="left:59.5px;top:446.54px" width="7.4" height="7.4" viewBox="0 0 8 8"><rect x="0.35" y="0.35" width="7.3" height="6.5" rx="0.6" fill="#eef5fd" stroke="#7eaee6" stroke-width="0.7"/><rect x="1.5" y="3.6" width="1.4" height="2.8" fill="#9bd15a"/><rect x="3.3" y="1.7" width="1.4" height="4.7" fill="#ea5545"/><rect x="5.1" y="2.7" width="1.4" height="3.7" fill="#a98be6"/><rect x="2" y="7.1" width="4" height="0.8" fill="#7eaee6"/></svg>
<span class="t" style="left:70.1px;top:445.52px;font-size:6.6px;line-height:9.24px;color:#333;transform:scaleX(0.9344);">Среднее время окончания работы</span>
<svg style="left:59.5px;top:456.93px" width="7.4" height="7.4" viewBox="0 0 8 8"><rect x="0.35" y="0.35" width="7.3" height="6.5" rx="0.6" fill="#eef5fd" stroke="#7eaee6" stroke-width="0.7"/><rect x="1.5" y="3.6" width="1.4" height="2.8" fill="#9bd15a"/><rect x="3.3" y="1.7" width="1.4" height="4.7" fill="#ea5545"/><rect x="5.1" y="2.7" width="1.4" height="3.7" fill="#a98be6"/><rect x="2" y="7.1" width="4" height="0.8" fill="#7eaee6"/></svg>
<span class="t" style="left:70.1px;top:455.91px;font-size:6.6px;line-height:9.24px;color:#333;transform:scaleX(0.9282);">Среднее время простоя ПК</span>
<svg style="left:38.6px;top:468.71999999999997px" width="4.6" height="3.2" viewBox="0 0 4.6 3.2" fill="none" stroke="#222" stroke-width="1.15"><path d="M0.4 0.5 L2.3 2.5 L4.2 0.5"/></svg>
<svg style="left:49.2px;top:467.21999999999997px" width="7.4" height="6" viewBox="0 0 7.4 6"><path d="M0.3 0.8 Q0.3 0.3 0.8 0.3 H2.6 L3.3 1 H5.8 Q6.3 1 6.3 1.5 V5.7 H0.3 Z" fill="#f5bd4a"/><path d="M1.4 2.4 H7.2 L6.2 5.7 H0.4 Z" fill="#fde09a"/></svg>
<span class="t" style="left:59.7px;top:466.30px;font-size:6.6px;line-height:9.24px;color:#333;transform:scaleX(0.9121);">Буфер обмена</span>
<div class="a" style="left:59px;top:476px;width:7px;height:1px;transform:translate(0.700px,0.000px) scale(1.0000,0.9000);background:#8db6e8;"></div>
<svg style="left:366.2px;top:50.8px" width="15.8" height="14.9" viewBox="0 0 15.8 14.9"><rect x="0.5" y="0.5" width="14.8" height="13.9" rx="2.2" fill="#f6f9fe" stroke="#a9c6ea" stroke-width="1"/><rect x="2.7" y="8.1" width="3" height="5.2" fill="#6bb300"/><rect x="6.1" y="3.6" width="3.2" height="10" rx="1" fill="#f4645a"/><rect x="9.8" y="5.3" width="3" height="8" rx="0.8" fill="#a64fd0"/><circle cx="11.3" cy="7.6" r="0.6" fill="#4a7fd0"/><circle cx="11.3" cy="9.6" r="0.6" fill="#4a7fd0"/><circle cx="11.3" cy="11.6" r="0.6" fill="#4a7fd0"/></svg>
<span class="t" style="left:388.8px;top:51.48px;font-size:11.6px;line-height:16.24px;color:#6a6a6a;-webkit-text-stroke:0.2px #6a6a6a;transform:scaleX(0.9149);">Время простоя ПК (Копия)</span>
<svg style="left:526.6px;top:56.6px" width="4.6" height="3" viewBox="0 0 5 3.2" fill="none" stroke="#555" stroke-width="1.2"><path d="M0.4 2.8 L2.5 0.6 L4.6 2.8"/></svg>
<svg style="left:674.4px;top:54.8px" width="6.4" height="7" viewBox="0 0 6.4 7" fill="none" stroke="#9a9a9a" stroke-width="0.6"><circle cx="3.2" cy="2" r="1.6"/><path d="M0.4 6.7 C0.4 3.4 6 3.4 6 6.7 Z"/></svg>
<span class="t" style="left:682.5px;top:53.78px;font-size:6.6px;line-height:9.24px;color:#7c7c7c;transform:scaleX(0.8583);">19</span>
<svg style="left:693.3px;top:54.7px" width="7.4" height="7.4" viewBox="0 0 7.4 7.4" fill="none" stroke="#9a9a9a" stroke-width="0.6"><circle cx="3.7" cy="3.7" r="3.3"/><path d="M3.7 1.6 V3.9 H5.3"/></svg>
<span class="t" style="left:702.8px;top:53.78px;font-size:6.6px;line-height:9.24px;color:#7c7c7c;transform:scaleX(0.9024);">27.03.2022 - 01.04.2022</span>
<svg style="left:775px;top:54px" width="8.4" height="8.4" viewBox="-5 -5 10 10"><rect x="-1.1" y="-5" width="2.2" height="2.6" transform="rotate(0)" fill="#a0a0a0"/><rect x="-1.1" y="-5" width="2.2" height="2.6" transform="rotate(45)" fill="#a0a0a0"/><rect x="-1.1" y="-5" width="2.2" height="2.6" transform="rotate(90)" fill="#a0a0a0"/><rect x="-1.1" y="-5" width="2.2" height="2.6" transform="rotate(135)" fill="#a0a0a0"/><rect x="-1.1" y="-5" width="2.2" height="2.6" transform="rotate(180)" fill="#a0a0a0"/><rect x="-1.1" y="-5" width="2.2" height="2.6" transform="rotate(225)" fill="#a0a0a0"/><rect x="-1.1" y="-5" width="2.2" height="2.6" transform="rotate(270)" fill="#a0a0a0"/><rect x="-1.1" y="-5" width="2.2" height="2.6" transform="rotate(315)" fill="#a0a0a0"/><circle r="3.6" fill="#a0a0a0"/><circle r="1.7" fill="#fff"/></svg>
<div class="a" style="left:357px;top:70px;width:433px;height:1px;transform:translate(0.800px,0.900px) scale(0.9995,0.8000);background:#e7e7e9;"></div>
<div class="a" style="left:437px;top:92px;width:353px;height:1px;transform:translate(0.000px,0.400px) scale(1.0000,0.8000);background:#e3e3e3;"></div>
<div class="a" style="left:358px;top:77px;width:79px;height:16px;transform:translate(0.200px,0.200px) scale(1.0038,1.0000);background:#fff;border:1px solid #e3e3e3;border-bottom:none;border-left:none;border-radius:0 2px 0 0;"></div>
<span class="t" style="left:367.9px;top:80.47px;font-size:6.9px;line-height:9.66px;color:#222;transform:scaleX(1.0618);">Общие настройки</span>
<div class="a" style="left:439px;top:77px;width:44px;height:15px;transform:translate(0.700px,0.200px) scale(0.9955,1.0200);background:#dfe3ec;border-radius:2px 2px 0 0;"></div>
<span class="t" style="left:449.9px;top:80.47px;font-size:6.9px;line-height:9.66px;color:#222;transform:scaleX(1.0311);">Фильтр</span>
<span class="t" style="left:374.3px;top:99.52px;font-size:8.4px;line-height:11.76px;color:#222;font-weight:bold;transform:scaleX(0.9419);">Параметры отчета</span>
<div class="a" style="left:452px;top:105px;width:320px;height:1px;transform:translate(0.000px,0.200px) scale(0.9984,0.7000);background:#e2e2e2;"></div>
<div class="a" style="left:776px;top:99px;width:3px;height:91px;transform:translate(0.500px,0.500px) scale(0.9667,0.9978);background:#e2e2e2;border-radius:1.45px;"></div>
<svg style="left:776.2px;top:95.8px" width="3.6" height="2.2" viewBox="0 0 4 2.4"><path d="M0 2.4 H4 L2 0 Z" fill="#d0d0d0"/></svg>
<svg style="left:776.2px;top:192.4px" width="3.6" height="2.2" viewBox="0 0 4 2.4"><path d="M0 0 H4 L2 2.4 Z" fill="#d0d0d0"/></svg>
<span class="t" style="left:374.8px;top:120.69px;font-size:6.3px;line-height:8.82px;color:#2a2a2a;-webkit-text-stroke:0.28px #2a2a2a;transform:scaleX(0.9946);">Представление отчета:</span>
<div class="a" style="left:446px;top:117px;width:62px;height:15px;transform:translate(0.400px,0.400px) scale(1.0032,1.0000);background:#f1f1f1;border:1px solid #e3e3e3;border-radius:2px;"></div>
<div class="a" style="left:461px;top:117px;width:16px;height:14px;transform:translate(0.600px,0.900px) scale(0.9875,1.0000);background:#dbe9f8;"></div>
<div class="a" style="left:461px;top:117px;width:1px;height:14px;transform:translate(0.300px,0.900px) scale(0.6000,1.0000);background:#e0e0e0;"></div>
<div class="a" style="left:477px;top:117px;width:1px;height:14px;transform:translate(0.200px,0.900px) scale(0.6000,1.0000);background:#e0e0e0;"></div>
<div class="a" style="left:492px;top:117px;width:1px;height:14px;transform:translate(0.500px,0.900px) scale(0.6000,1.0000);background:#e0e0e0;"></div>
<svg style="left:450px;top:121px" width="7.8" height="7.6" viewBox="0 0 8 8" fill="#8c8c8c"><rect x="0.2" y="0" width="1.5" height="7"/><rect x="2.9" y="2.6" width="1.5" height="4.4"/><rect x="5.6" y="0.6" width="1.5" height="6.4"/><rect x="0" y="7.2" width="8" height="0.8"/></svg>
<svg style="left:465px;top:121px" width="8" height="7.8" viewBox="0 0 8 8" fill="#2f7bd9"><rect x="0" y="0" width="1" height="8"/><rect x="0" y="7" width="8" height="1"/><rect x="1.6" y="0.6" width="2.6" height="1.5"/><rect x="1.6" y="2.8" width="4.4" height="1.5"/><rect x="1.6" y="5" width="6" height="1.5"/></svg>
<svg style="left:480.8px;top:121px" width="7.8" height="7.8" viewBox="0 0 8 8"><circle cx="4" cy="4" r="3.9" fill="#8c8c8c"/><path d="M4.3 3.7 V0.3 A3.7 3.7 0 0 1 7.7 3.7 Z" fill="#e4e4e4"/></svg>
<svg style="left:495.8px;top:121px" width="8.4" height="7.8" viewBox="0 0 8.4 7.8" fill="none" stroke="#8c8c8c" stroke-width="1"><rect x="0.5" y="0.5" width="7.4" height="6.8"/><path d="M0.5 2.4 H7.9 M3.2 2.4 V7.3" /><rect x="0.5" y="0.5" width="7.4" height="1.6" fill="#8c8c8c"/></svg>
<span class="t" style="left:374.8px;top:141.19px;font-size:6.3px;line-height:8.82px;color:#2a2a2a;-webkit-text-stroke:0.28px #2a2a2a;transform:scaleX(1.0102);">Число результатов:</span>
<div class="a" style="left:446px;top:137px;width:52px;height:16px;transform:translate(0.600px,0.600px) scale(0.9923,0.9750);background:#fff;border:1px solid #e3e3e3;border-radius:2px;"></div>
<span class="t" style="left:451.8px;top:141.05px;font-size:6.5px;line-height:9.1px;color:#333;transform:scaleX(0.9545);">20</span>
<span class="t" style="left:509px;top:141.19px;font-size:6.3px;line-height:8.82px;color:#2a2a2a;-webkit-text-stroke:0.28px #2a2a2a;transform:scaleX(1.0334);">Тип сортировки:</span>
<div class="a" style="left:559px;top:138px;width:37px;height:15px;transform:translate(0.000px,0.000px) scale(1.0054,1.0133);background:#f1f1f1;border:1px solid #e3e3e3;border-radius:2px;"></div>
<div class="a" style="left:577px;top:138px;width:18px;height:14px;transform:translate(0.400px,0.500px) scale(1.0167,1.0143);background:#dbe9f8;"></div>
<svg style="left:563.6px;top:141.4px" width="9.4" height="8.4" viewBox="0 0 9.4 8.4"><path d="M1.5 0 V8 M0 6.4 L1.5 8.2 L3 6.4" stroke="#5aa832" stroke-width="1.2" fill="none"/><rect x="4" y="0.6" width="2.6" height="1.5" fill="#4a8fe0"/><rect x="4" y="3.2" width="3.8" height="1.5" fill="#4a8fe0"/><rect x="4" y="5.8" width="5.2" height="1.5" fill="#4a8fe0"/></svg>
<svg style="left:582px;top:141.4px" width="9.4" height="8.4" viewBox="0 0 9.4 8.4"><path d="M1.5 0 V8 M0 6.4 L1.5 8.2 L3 6.4" stroke="#5aa832" stroke-width="1.2" fill="none"/><rect x="4" y="0.6" width="5.2" height="1.5" fill="#4a8fe0"/><rect x="4" y="3.2" width="3.8" height="1.5" fill="#4a8fe0"/><rect x="4" y="5.8" width="2.6" height="1.5" fill="#4a8fe0"/></svg>
<div class="a" style="left:447px;top:159px;width:16px;height:7px;transform:translate(0.700px,0.500px) scale(1.0000,1.0571);background:#dcdcdc;border-radius:3.7px;"></div>
<div class="a" style="left:448px;top:160px;width:6px;height:6px;transform:translate(0.400px,0.100px) scale(1.0333,1.0333);background:#fff;border-radius:3.1px;"></div>
<svg style="left:450.1px;top:161.8px" width="2.8" height="2.8" viewBox="0 0 3 3" stroke="#7a7a7a" stroke-width="0.7"><path d="M0 0 L3 3 M3 0 L0 3"/></svg>
<span class="t" style="left:469.1px;top:158.69px;font-size:6.3px;line-height:8.82px;color:#333;transform:scaleX(0.9980);">Отображать данные попавшие под ограничение в группе "Другие"</span>
<span class="t" style="left:374.8px;top:175.69px;font-size:6.3px;line-height:8.82px;color:#2a2a2a;-webkit-text-stroke:0.28px #2a2a2a;transform:scaleX(0.9805);">Тип отчета:</span>
<div class="a" style="left:446px;top:172px;width:244px;height:15px;transform:translate(0.600px,0.700px) scale(1.0000,0.9933);background:#fff;border:1px solid #e3e3e3;border-radius:2px;"></div>
<svg style="left:450.4px;top:176.2px" width="7.8" height="8" viewBox="0 0 7.8 8"><rect x="0.3" y="0.3" width="7.2" height="5.6" fill="#eaf2fc" stroke="#9aa7b8" stroke-width="0.6"/><circle cx="3.9" cy="3" r="1.7" fill="#f3b73b"/><rect x="3.3" y="5.9" width="1.2" height="1.2" fill="#9aa7b8"/><rect x="2" y="7" width="3.8" height="0.8" fill="#9aa7b8"/></svg>
<span class="t" style="left:464.2px;top:175.55px;font-size:6.5px;line-height:9.1px;color:#333;transform:scaleX(0.9540);">Время простоя ПК</span>
<svg style="left:683px;top:177.6px" width="5" height="5" viewBox="0 0 5 5" stroke="#c4c4c4" stroke-width="0.7"><path d="M0 0 L5 5 M5 0 L0 5"/></svg>
<div class="a" style="left:693px;top:172px;width:78px;height:15px;transform:translate(0.200px,0.700px) scale(1.0051,0.9933);background:#fff;border:1px solid #e3e3e3;border-radius:2px;"></div>
<span class="t" style="left:698.7px;top:175.55px;font-size:6.5px;line-height:9.1px;color:#333;transform:scaleX(0.9185);">Суммарный</span>
<svg style="left:763.9px;top:179.2px" width="3.6" height="2.1" viewBox="0 0 4 2.4"><path d="M0 0 H4 L2 2.4 Z" fill="#555"/></svg>
<div class="a" style="left:374px;top:201px;width:402px;height:1px;transform:translate(0.000px,0.300px) scale(1.0000,0.7000);background:#ececec;"></div>
<div class="a" style="left:652px;top:207px;width:68px;height:16px;transform:translate(0.500px,0.300px) scale(1.0044,1.0125);background:#f3f3f3;border:1px solid #e3e3e3;border-radius:2px;"></div>
<div class="a" style="left:709px;top:207px;width:1px;height:15px;transform:translate(0.200px,0.800px) scale(0.7000,1.0133);background:#e0e0e0;"></div>
<span class="t" style="left:658px;top:211.45px;font-size:6.5px;line-height:9.1px;color:#222;transform:scaleX(0.9407);">Построить отчет</span>
<svg style="left:713.2px;top:215.2px" width="3.8" height="2.2" viewBox="0 0 4 2.4"><path d="M0 0 H4 L2 2.4 Z" fill="#555"/></svg>
<div class="a" style="left:725px;top:207px;width:51px;height:16px;transform:translate(0.400px,0.300px) scale(1.0078,1.0125);background:#f3f3f3;border:1px solid #e3e3e3;border-radius:2px;"></div>
<span class="t" style="left:740px;top:211.45px;font-size:6.5px;line-height:9.1px;color:#222;transform:scaleX(0.9434);">Отмена</span>
<div class="a" style="left:357px;top:229px;width:433px;height:1px;transform:translate(0.800px,0.200px) scale(0.9995,0.8000);background:#e8e9ec;"></div>
<span class="t" style="left:368.6px;top:235.78px;font-size:8.6px;line-height:12.04px;color:#555;transform:scaleX(0.9913);">Суммарный ТОП-отчет "Время простоя ПК"</span>
<div class="a" style="left:548px;top:241px;width:232px;height:1px;transform:translate(0.000px,0.200px) scale(1.0000,0.7000);background:#e2e2e2;"></div>
<div class="a" style="left:365px;top:259.4px;width:416px;height:207.40000000000003px;overflow:hidden;">
<div class="a" style="left:123px;top:1px;width:26px;height:206px;transform:translate(0.000px,0.200px) scale(0.9981,1.0010);background:#f4f4f4;"></div>
<div class="a" style="left:174px;top:1px;width:26px;height:206px;transform:translate(0.900px,0.200px) scale(0.9981,1.0010);background:#f4f4f4;"></div>
<div class="a" style="left:226px;top:1px;width:26px;height:206px;transform:translate(0.800px,0.200px) scale(0.9981,1.0010);background:#f4f4f4;"></div>
<div class="a" style="left:278px;top:1px;width:26px;height:206px;transform:translate(0.700px,0.200px) scale(0.9981,1.0010);background:#f4f4f4;"></div>
<div class="a" style="left:330px;top:1px;width:26px;height:206px;transform:translate(0.600px,0.200px) scale(0.9981,1.0010);background:#f4f4f4;"></div>
<div class="a" style="left:382px;top:1px;width:26px;height:206px;transform:translate(0.500px,0.200px) scale(0.9981,1.0010);background:#f4f4f4;"></div>
<div class="a" style="left:123px;top:1px;width:292px;height:1px;transform:translate(0.000px,0.000px) scale(1.0000,0.7000);background:#e9e9e9;"></div>
<div class="a" style="left:122px;top:1px;width:1px;height:206px;transform:translate(0.800px,0.000px) scale(0.7000,1.0019);background:#e6e6e6;"></div>
<div class="a" style="left:3px;top:2px;width:108px;height:25px;transform:translate(0.600px,0.600px) scale(1.0037,1.0000);background:#f3f3f3;border-radius:1.2px;"></div>
<div class="a" style="left:112px;top:14px;width:11px;height:1px;transform:translate(0.000px,0.800px) scale(1.0000,0.7000);background:#e3e3e3;"></div>
<svg style="left:7.80px;top:8.30px" width="12.8" height="13.2" viewBox="0 0 13 13.2"><defs><clipPath id="av0"><rect width="13" height="13.2" rx="2.2"/></clipPath></defs><g clip-path="url(#av0)"><rect width="13" height="13.2" fill="#3a2a24"/><path d="M0 13.2 V12 Q6.5 8.8 13 12 V13.2 Z" fill="#3a6ab0"/><ellipse cx="6.5" cy="5.4" rx="4.1" ry="4.8" fill="#2e201a"/><ellipse cx="6.5" cy="6.7" rx="3.3" ry="4.2" fill="#c98a7a"/></g></svg>
<span class="t" style="left:24.2px;top:4.14px;font-size:6.8px;line-height:9.52px;color:#222;transform:scaleX(0.8937);">Жданова Юлия</span>
<span class="t" style="left:24.2px;top:13.69px;font-size:5.3px;line-height:7.42px;color:#999;transform:scaleX(0.9539);">Бухгалтерия</span>
<span class="t" style="left:24.2px;top:20.29px;font-size:5.3px;line-height:7.42px;color:#999;transform:scaleX(0.9567);">Главный бухгалтер</span>
<div class="a" style="left:123px;top:6px;width:260px;height:17px;transform:translate(0.000px,0.800px) scale(0.9985,0.9824);background:#6a1b9a;border-radius:0 1.6px 1.6px 0;"></div>
<span class="t" style="left:385.2px;top:11.04px;font-size:6.8px;line-height:9.52px;color:#2a2a2a;transform:scaleX(0.8690);">09:40:16</span>
<div class="a" style="left:3px;top:30px;width:108px;height:25px;transform:translate(0.600px,0.630px) scale(1.0037,1.0000);background:#f3f3f3;border-radius:1.2px;"></div>
<div class="a" style="left:112px;top:42px;width:11px;height:1px;transform:translate(0.000px,0.830px) scale(1.0000,0.7000);background:#e3e3e3;"></div>
<svg style="left:7.80px;top:36.33px" width="12.8" height="13.2" viewBox="0 0 13 13.2"><defs><clipPath id="av1"><rect width="13" height="13.2" rx="2.2"/></clipPath></defs><g clip-path="url(#av1)"><rect width="13" height="13.2" fill="#4a4a52"/><path d="M0 13.2 V12 Q6.5 8.8 13 12 V13.2 Z" fill="#2f5fa8"/><ellipse cx="6.5" cy="5.4" rx="4.1" ry="4.8" fill="#3a2a20"/><ellipse cx="6.5" cy="6.7" rx="3.3" ry="4.2" fill="#d9a38c"/></g></svg>
<span class="t" style="left:24.2px;top:32.17px;font-size:6.8px;line-height:9.52px;color:#222;transform:scaleX(0.9044);">Иванов Александр</span>
<span class="t" style="left:24.2px;top:41.72px;font-size:5.3px;line-height:7.42px;color:#999;transform:scaleX(0.9904);">Отдел продаж</span>
<span class="t" style="left:24.2px;top:48.32px;font-size:5.3px;line-height:7.42px;color:#999;transform:scaleX(0.9918);">Менеджер</span>
<div class="a" style="left:123px;top:34px;width:167px;height:17px;transform:translate(0.000px,0.830px) scale(1.0024,0.9824);background:#8e24aa;border-radius:0 1.6px 1.6px 0;"></div>
<span class="t" style="left:293.0px;top:39.07px;font-size:6.8px;line-height:9.52px;color:#2a2a2a;transform:scaleX(0.8690);">06:14:39</span>
<div class="a" style="left:3px;top:58px;width:108px;height:25px;transform:translate(0.600px,0.660px) scale(1.0037,1.0000);background:#f3f3f3;border-radius:1.2px;"></div>
<div class="a" style="left:112px;top:70px;width:11px;height:1px;transform:translate(0.000px,0.860px) scale(1.0000,0.7000);background:#e3e3e3;"></div>
<svg style="left:7.80px;top:64.36px" width="12.8" height="13.2" viewBox="0 0 13 13.2"><defs><clipPath id="av2"><rect width="13" height="13.2" rx="2.2"/></clipPath></defs><g clip-path="url(#av2)"><rect width="13" height="13.2" fill="#3a2e2a"/><path d="M0 13.2 V12 Q6.5 8.8 13 12 V13.2 Z" fill="#4a4644"/><ellipse cx="6.5" cy="5.4" rx="4.1" ry="4.8" fill="#d99a88"/><ellipse cx="6.5" cy="6.7" rx="3.3" ry="4.2" fill="#d99a88"/><path d="M3.6 7.6 Q6.5 9 9.4 7.6 Q9.2 11.2 6.5 11.4 Q3.8 11.2 3.6 7.6 Z" fill="#8a8280"/></g></svg>
<span class="t" style="left:24.2px;top:60.20px;font-size:6.8px;line-height:9.52px;color:#222;transform:scaleX(0.9099);">Жуков Михаил</span>
<span class="t" style="left:24.2px;top:69.75px;font-size:5.3px;line-height:7.42px;color:#999;transform:scaleX(0.9606);">Управление</span>
<span class="t" style="left:24.2px;top:76.35px;font-size:5.3px;line-height:7.42px;color:#999;transform:scaleX(0.9765);">Финансовый директор</span>
<div class="a" style="left:123px;top:62px;width:110px;height:17px;transform:translate(0.000px,0.860px) scale(1.0000,0.9824);background:#ab47bc;border-radius:0 1.6px 1.6px 0;"></div>
<span class="t" style="left:235.6px;top:67.10px;font-size:6.8px;line-height:9.52px;color:#2a2a2a;transform:scaleX(0.8690);">04:05:49</span>
<div class="a" style="left:3px;top:86px;width:108px;height:25px;transform:translate(0.600px,0.690px) scale(1.0037,1.0000);background:#f3f3f3;border-radius:1.2px;"></div>
<div class="a" style="left:112px;top:98px;width:11px;height:1px;transform:translate(0.000px,0.890px) scale(1.0000,0.7000);background:#e3e3e3;"></div>
<svg style="left:7.80px;top:92.39px" width="12.8" height="13.2" viewBox="0 0 13 13.2"><defs><clipPath id="av3"><rect width="13" height="13.2" rx="2.2"/></clipPath></defs><g clip-path="url(#av3)"><rect width="13" height="13.2" fill="#3a3a3a"/><path d="M0 13.2 V12 Q6.5 8.8 13 12 V13.2 Z" fill="#555555"/><ellipse cx="6.5" cy="5.4" rx="4.1" ry="4.8" fill="#2c2c2c"/><ellipse cx="6.5" cy="6.7" rx="3.3" ry="4.2" fill="#a8a8a8"/></g></svg>
<span class="t" style="left:24.2px;top:88.23px;font-size:6.8px;line-height:9.52px;color:#222;transform:scaleX(0.8791);">Халтурин Вадим</span>
<span class="t" style="left:24.2px;top:97.78px;font-size:5.3px;line-height:7.42px;color:#999;transform:scaleX(0.9759);">Технический отдел</span>
<span class="t" style="left:24.2px;top:104.38px;font-size:5.3px;line-height:7.42px;color:#999;transform:scaleX(0.9626);">Системный администратор</span>
<div class="a" style="left:123px;top:90px;width:99px;height:17px;transform:translate(0.000px,0.890px) scale(1.0030,0.9824);background:#29b6f6;border-radius:0 1.6px 1.6px 0;"></div>
<span class="t" style="left:224.9px;top:95.13px;font-size:6.8px;line-height:9.52px;color:#2a2a2a;transform:scaleX(0.8690);">03:43:30</span>
<div class="a" style="left:3px;top:114px;width:108px;height:25px;transform:translate(0.600px,0.720px) scale(1.0037,1.0000);background:#f3f3f3;border-radius:1.2px;"></div>
<div class="a" style="left:112px;top:126px;width:11px;height:1px;transform:translate(0.000px,0.920px) scale(1.0000,0.7000);background:#e3e3e3;"></div>
<svg style="left:7.80px;top:120.42px" width="12.8" height="13.2" viewBox="0 0 13 13.2"><defs><clipPath id="av4"><rect width="13" height="13.2" rx="2.2"/></clipPath></defs><g clip-path="url(#av4)"><rect width="13" height="13.2" fill="#4a3a34"/><path d="M0 13.2 V12 Q6.5 8.8 13 12 V13.2 Z" fill="#2e2a2a"/><ellipse cx="6.5" cy="5.4" rx="4.1" ry="4.8" fill="#2e2220"/><ellipse cx="6.5" cy="6.7" rx="3.3" ry="4.2" fill="#c08a78"/><path d="M3.6 7.6 Q6.5 9 9.4 7.6 Q9.2 11.2 6.5 11.4 Q3.8 11.2 3.6 7.6 Z" fill="#4a3430"/></g></svg>
<span class="t" style="left:24.2px;top:116.26px;font-size:6.8px;line-height:9.52px;color:#222;transform:scaleX(0.9127);">Волков Иван</span>
<span class="t" style="left:24.2px;top:125.81px;font-size:5.3px;line-height:7.42px;color:#999;transform:scaleX(0.9904);">Отдел продаж</span>
<span class="t" style="left:24.2px;top:132.41px;font-size:5.3px;line-height:7.42px;color:#999;transform:scaleX(0.9918);">Менеджер</span>
<div class="a" style="left:123px;top:118px;width:90px;height:17px;transform:translate(0.000px,0.920px) scale(1.0033,0.9824);background:#039be5;border-radius:0 1.6px 1.6px 0;"></div>
<span class="t" style="left:215.9px;top:123.16px;font-size:6.8px;line-height:9.52px;color:#2a2a2a;transform:scaleX(0.8690);">03:23:07</span>
<div class="a" style="left:3px;top:142px;width:108px;height:25px;transform:translate(0.600px,0.750px) scale(1.0037,1.0000);background:#f3f3f3;border-radius:1.2px;"></div>
<div class="a" style="left:112px;top:154px;width:11px;height:1px;transform:translate(0.000px,0.950px) scale(1.0000,0.7000);background:#e3e3e3;"></div>
<svg style="left:7.80px;top:148.45px" width="12.8" height="13.2" viewBox="0 0 13 13.2"><defs><clipPath id="av5"><rect width="13" height="13.2" rx="2.2"/></clipPath></defs><g clip-path="url(#av5)"><rect width="13" height="13.2" fill="#a8c4e0"/><path d="M0 13.2 V12 Q6.5 8.8 13 12 V13.2 Z" fill="#3f6fb0"/><ellipse cx="6.5" cy="5.4" rx="4.1" ry="4.8" fill="#c8c8c8"/><ellipse cx="6.5" cy="6.7" rx="3.3" ry="4.2" fill="#d89a80"/></g></svg>
<span class="t" style="left:24.2px;top:144.29px;font-size:6.8px;line-height:9.52px;color:#222;transform:scaleX(0.9080);">Зверев Николай</span>
<span class="t" style="left:24.2px;top:153.84px;font-size:5.3px;line-height:7.42px;color:#999;transform:scaleX(0.9904);">Отдел продаж</span>
<span class="t" style="left:24.2px;top:160.44px;font-size:5.3px;line-height:7.42px;color:#999;transform:scaleX(0.9580);">Начальник отдела</span>
<div class="a" style="left:123px;top:146px;width:88px;height:17px;transform:translate(0.000px,0.950px) scale(0.9943,0.9824);background:#0277bd;border-radius:0 1.6px 1.6px 0;"></div>
<span class="t" style="left:213.1px;top:151.19px;font-size:6.8px;line-height:9.52px;color:#2a2a2a;transform:scaleX(0.8690);">03:16:41</span>
<div class="a" style="left:3px;top:170px;width:108px;height:25px;transform:translate(0.600px,0.780px) scale(1.0037,1.0000);background:#f3f3f3;border-radius:1.2px;"></div>
<div class="a" style="left:112px;top:182px;width:11px;height:1px;transform:translate(0.000px,0.980px) scale(1.0000,0.7000);background:#e3e3e3;"></div>
<svg style="left:7.80px;top:176.48px" width="12.8" height="13.2" viewBox="0 0 13 13.2"><defs><clipPath id="av6"><rect width="13" height="13.2" rx="2.2"/></clipPath></defs><g clip-path="url(#av6)"><rect width="13" height="13.2" fill="#e8e6e4"/><path d="M2.2 12.6 V5.6 Q2.2 0.8 6.5 0.8 Q10.8 0.8 10.8 5.6 V12.6 Z" fill="#4a3428"/><path d="M0 13.2 V12 Q6.5 8.8 13 12 V13.2 Z" fill="#d8d4d2"/><ellipse cx="6.5" cy="5.4" rx="4.1" ry="4.8" fill="#4a3428"/><ellipse cx="6.5" cy="6.7" rx="3.3" ry="4.2" fill="#e0a890"/></g></svg>
<span class="t" style="left:24.2px;top:172.32px;font-size:6.8px;line-height:9.52px;color:#222;transform:scaleX(0.9273);">Кравцова Елена</span>
<span class="t" style="left:24.2px;top:181.87px;font-size:5.3px;line-height:7.42px;color:#999;transform:scaleX(0.9904);">Отдел продаж</span>
<span class="t" style="left:24.2px;top:188.47px;font-size:5.3px;line-height:7.42px;color:#999;transform:scaleX(0.9627);">Старший менеджер</span>
<div class="a" style="left:123px;top:174px;width:80px;height:17px;transform:translate(0.000px,0.980px) scale(1.0025,0.9824);background:#00695c;border-radius:0 1.6px 1.6px 0;"></div>
<span class="t" style="left:205.8px;top:179.22px;font-size:6.8px;line-height:9.52px;color:#2a2a2a;transform:scaleX(0.8690);">03:00:31</span>
<div class="a" style="left:3px;top:198px;width:108px;height:25px;transform:translate(0.600px,0.810px) scale(1.0037,1.0000);background:#f3f3f3;border-radius:1.2px;"></div>
<div class="a" style="left:112px;top:211px;width:11px;height:1px;transform:translate(0.000px,0.010px) scale(1.0000,0.7000);background:#e3e3e3;"></div>
<svg style="left:7.80px;top:204.51px" width="12.8" height="13.2" viewBox="0 0 13 13.2"><defs><clipPath id="av7"><rect width="13" height="13.2" rx="2.2"/></clipPath></defs><g clip-path="url(#av7)"><rect width="13" height="13.2" fill="#e8e6e4"/><path d="M0 13.2 V12 Q6.5 8.8 13 12 V13.2 Z" fill="#30343c"/><ellipse cx="6.5" cy="5.4" rx="4.1" ry="4.8" fill="#3a2e28"/><ellipse cx="6.5" cy="6.7" rx="3.3" ry="4.2" fill="#c09078"/></g></svg>
<span class="t" style="left:24.2px;top:200.35px;font-size:6.8px;line-height:9.52px;color:#222;transform:scaleX(0.9170);">Казаков Денис</span>
<span class="t" style="left:24.2px;top:209.90px;font-size:5.3px;line-height:7.42px;color:#999;transform:scaleX(0.9904);">Отдел продаж</span>
<span class="t" style="left:24.2px;top:216.50px;font-size:5.3px;line-height:7.42px;color:#999;transform:scaleX(0.9918);">Менеджер</span>
<div class="a" style="left:123px;top:203px;width:78px;height:17px;transform:translate(0.000px,0.010px) scale(1.0064,0.9824);background:#00897b;border-radius:0 1.6px 1.6px 0;"></div>
<span class="t" style="left:204.1px;top:207.25px;font-size:6.8px;line-height:9.52px;color:#2a2a2a;transform:scaleX(0.8690);">02:58:10</span>
</div>
<div class="a" style="left:776px;top:262px;width:3px;height:203px;transform:translate(0.200px,0.000px) scale(1.1333,1.0000);background:#f7f7f7;border-radius:1.7px;"></div>
<div class="a" style="left:776px;top:266px;width:3px;height:75px;transform:translate(0.300px,0.200px) scale(1.0000,1.0027);background:#dcdcdc;border-radius:1.5px;"></div>
<div class="a" style="left:779px;top:260px;width:1px;height:206px;transform:translate(0.600px,0.400px) scale(0.7000,1.0019);background:#ececec;"></div>
<div class="a" style="left:488px;top:466px;width:292px;height:1px;transform:translate(0.000px,0.200px) scale(1.0000,0.7000);background:#ececec;"></div>
<svg style="left:776.2px;top:259.6px" width="3.6" height="2.2" viewBox="0 0 4 2.4"><path d="M0 2.4 H4 L2 0 Z" fill="#d0d0d0"/></svg>
<svg style="left:776.2px;top:464.2px" width="3.6" height="2.2" viewBox="0 0 4 2.4"><path d="M0 0 H4 L2 2.4 Z" fill="#d0d0d0"/></svg>
</div></body></html>
